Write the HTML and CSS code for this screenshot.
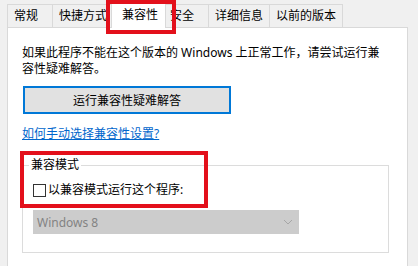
FILE: index.html
```html
<!DOCTYPE html>
<html>
<head>
    <title>属性 - 兼容性</title>
    <link rel="stylesheet" href="styles.css">
</head>
<body>
    <div class="dialog">
        <div class="tabs">
            <span class="tab">常规</span>
            <span class="tab">快捷方式</span>
            <span class="tab active">兼容性</span>
            <span class="tab">安全</span>
            <span class="tab">详细信息</span>
            <span class="tab">以前的版本</span>
        </div>
        <div class="panel">
            <p class="intro">如果此程序不能在这个版本的 Windows 上正常工作，请尝试运行兼<br>容性疑难解答。</p>
            <button class="run-btn">运行兼容性疑难解答</button>
            <a class="help-link" href="#">如何手动选择兼容性设置?</a>
            <fieldset class="group">
                <legend>兼容模式</legend>
                <label class="check-row">
                    <span class="check"></span>
                    以兼容模式运行这个程序:
                </label>
                <div class="combo">
                    <span>Windows 8</span>
                    <svg width="10" height="6" viewBox="0 0 10 6">
                        <polyline points="1,1 5,5 9,1" fill="none" stroke="#a6a6a6" stroke-width="1"/>
                    </svg>
                </div>
            </fieldset>
        </div>

        <!-- red highlight boxes drawn over the dialog -->
        <div class="mark mark-tab"></div>
        <div class="mark mark-group"></div>
    </div>
</body>
</html>
```

FILE: styles.css
```css
html, body {
    height: 266px;
    overflow: hidden;
}
body {
    margin: 0;
    background: #f0f0f0;
    font-family: "Noto Sans", "Noto Sans CJK SC", sans-serif;
    font-size: 12px;
    color: #000;
}
.dialog {
    position: relative;
    padding: 0 10px 0 7px;
}
.tabs {
    display: flex;
    align-items: flex-end;
    height: 27px;
}
.tab {
    box-sizing: border-box;
    min-width: 46px;
    height: 23px;
    line-height: 21px;
    padding: 0 6px;
    margin-left: -1px;
    border: 1px solid #d9d9d9;
    border-bottom: none;
    background: #f0f0f0;
}
.tab:first-child {
    margin-left: 0;
}
.tab.active {
    position: relative;
    z-index: 1;
    height: 27px;
    line-height: 25px;
    margin: 0 -2px -1px -3px;
    padding: 0 7px 0 10px;
    background: #fff;
}
.panel {
    min-height: 222px;
    padding: 17px 14px 0;
    background: #fff;
    border: 1px solid #d9d9d9;
}
.intro {
    margin: 0;
    line-height: 16px;
}
.run-btn {
    display: block;
    width: 208px;
    height: 28px;
    margin: 9px 0 0 1px;
    padding: 0;
    font: inherit;
    background: #e1e1e1;
    border: 2px solid #0078d7;
}
.help-link {
    display: inline-block;
    margin-top: 12px;
    line-height: 16px;
    color: #0066cc;
    text-decoration: underline;
}
.group {
    margin: 15px 4px 0 0;
    padding: 9px 10px 18px;
    border: 1px solid #dcdcdc;
}
.group legend {
    margin-left: -4px;
    padding: 0 2px;
    line-height: 16px;
}
.check-row {
    display: flex;
    align-items: center;
    gap: 2px;
    line-height: 16px;
}
.check {
    box-sizing: border-box;
    width: 13px;
    height: 13px;
    border: 1px solid #333;
    background: #fff;
}
.combo {
    display: flex;
    align-items: center;
    justify-content: space-between;
    box-sizing: border-box;
    width: 266px;
    height: 24px;
    margin-top: 12px;
    padding: 0 6px 0 4px;
    background: #cccccc;
    color: #838383;
}
.mark {
    position: absolute;
    box-sizing: border-box;
    border: 4px solid #e3101b;
}
.mark-tab {
    left: 106px;
    top: 0;
    width: 70px;
    height: 34px;
    z-index: 2;
}
.mark-group {
    left: 20px;
    top: 151px;
    width: 188px;
    height: 57px;
}
```
